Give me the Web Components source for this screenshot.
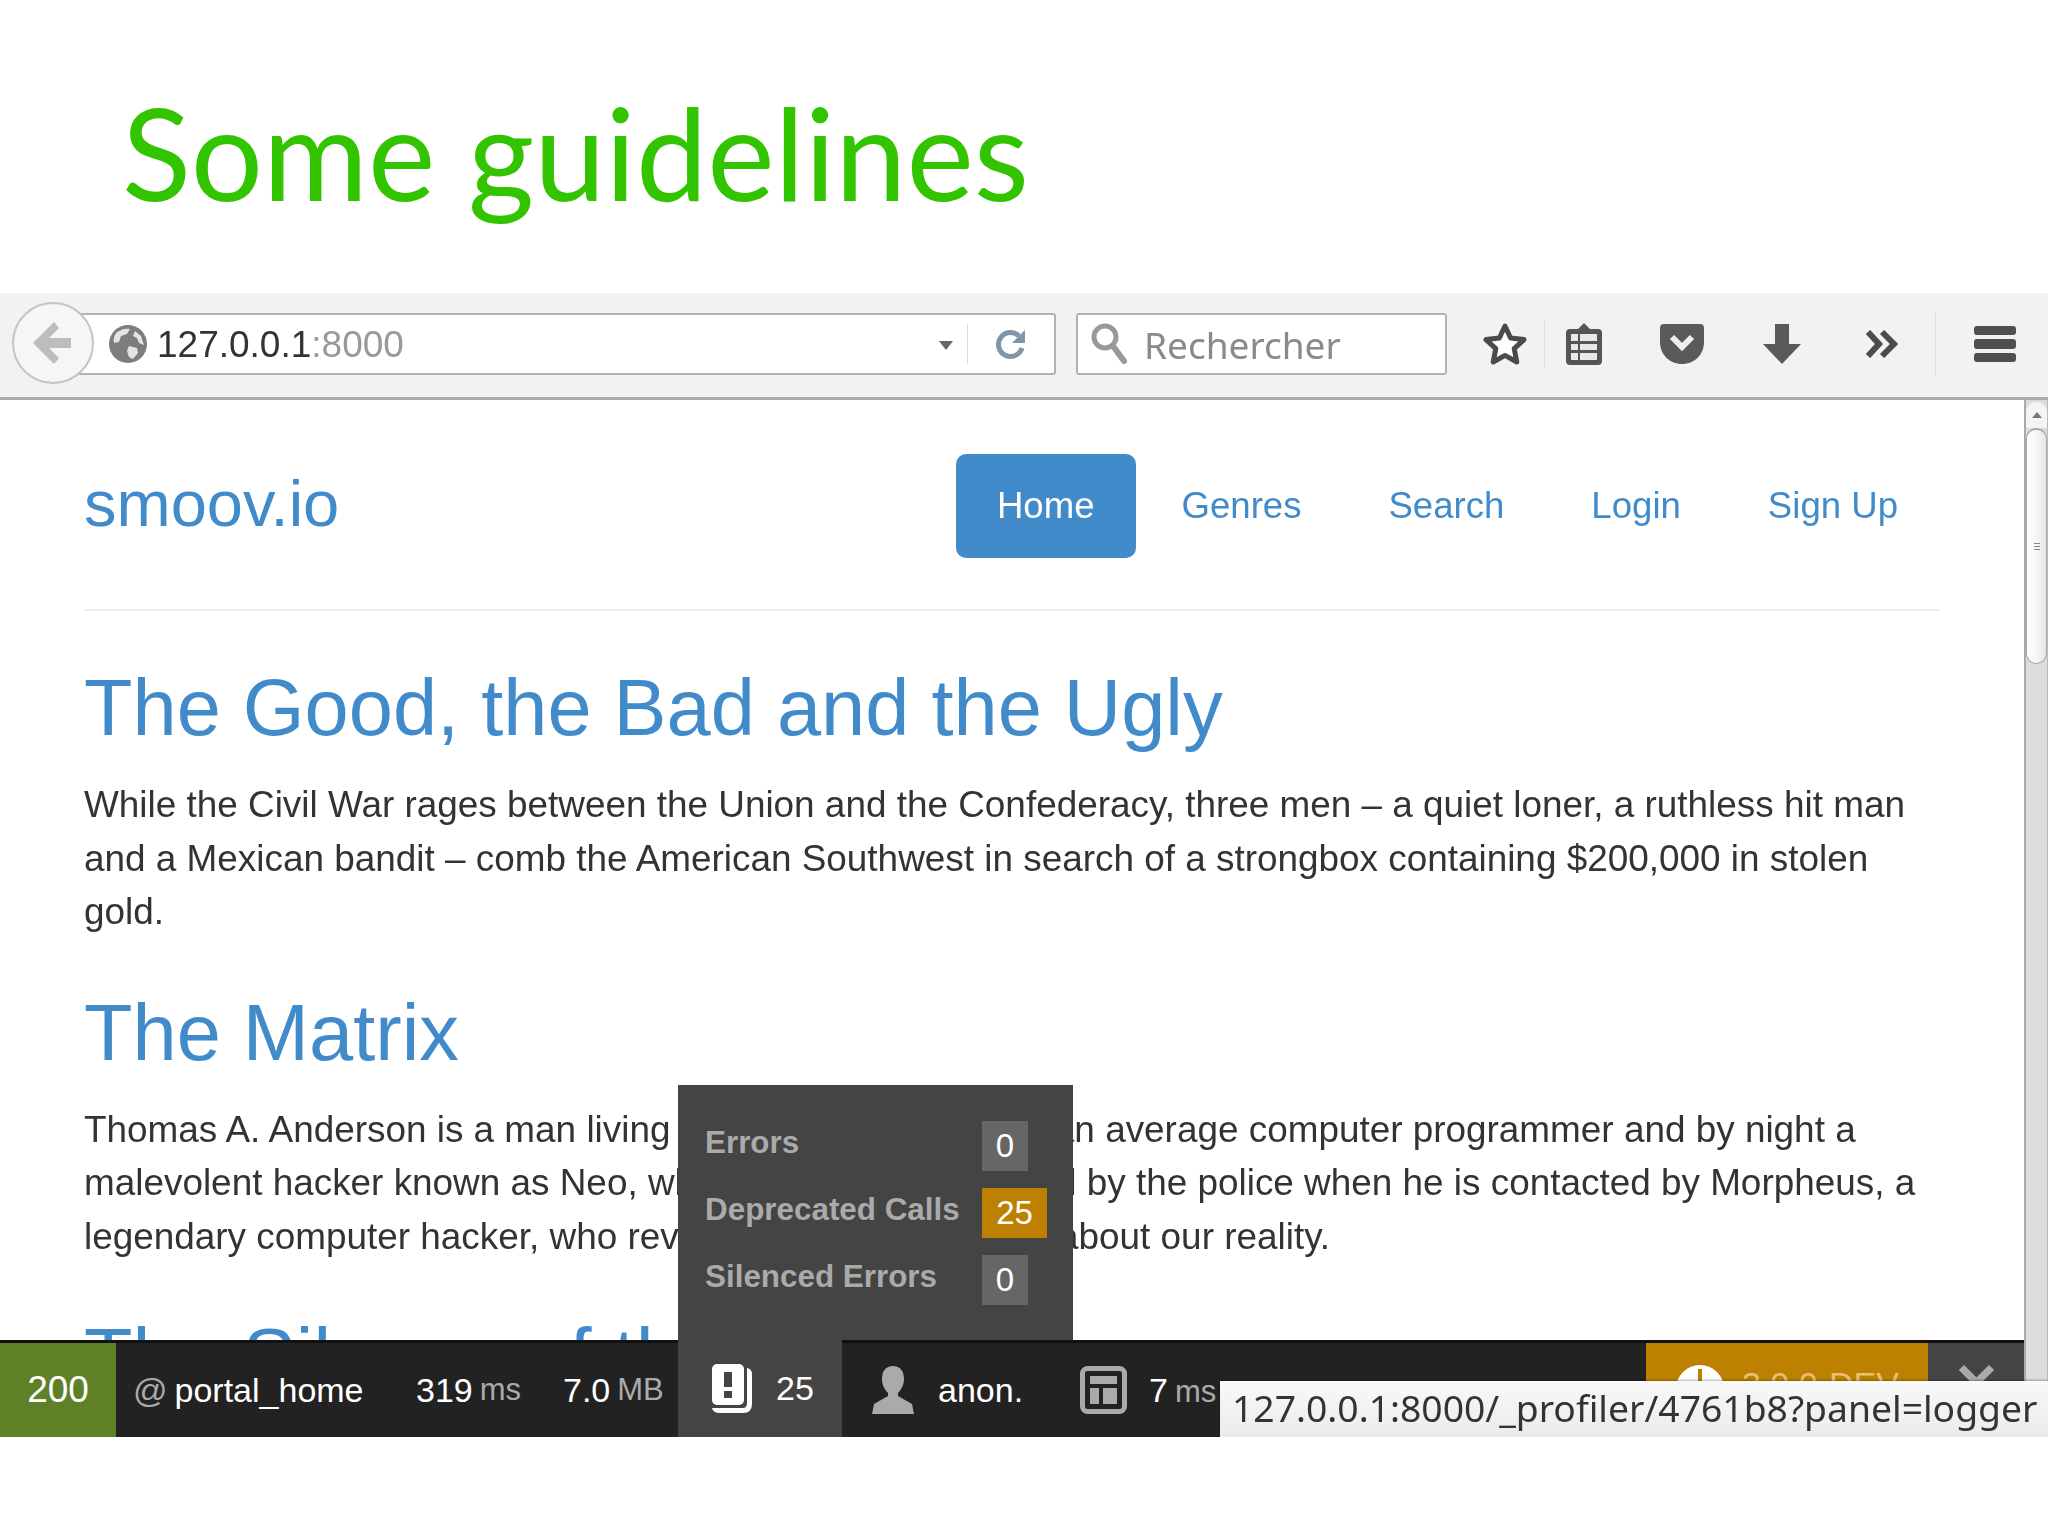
<!DOCTYPE html>
<html><head><meta charset="utf-8">
<style>
html,body{margin:0;padding:0;background:#fff}
body{width:2048px;height:1536px;overflow:hidden;font-family:"Liberation Sans",Arial,sans-serif}
</style></head><body>
<slide-deck>
  <slide-title>Some guidelines</slide-title>
  <browser-window>
    <browser-toolbar url-host="127.0.0.1" url-port=":8000" search="Rechercher"></browser-toolbar>
    <browser-viewport>
      <site-nav brand="smoov.io"></site-nav>
      <movie-item title-text="The Good, the Bad and the Ugly">While the Civil War rages between the Union and the Confederacy, three men – a quiet loner, a ruthless hit man and a Mexican bandit – comb the American Southwest in search of a strongbox containing $200,000 in stolen gold.</movie-item>
      <movie-item title-text="The Matrix">Thomas A. Anderson is a man living two lives. By day he is an average computer programmer and by night a malevolent hacker known as Neo, who finds himself targeted by the police when he is contacted by Morpheus, a legendary computer hacker, who reveals the shocking truth about our reality.</movie-item>
      <movie-item title-text="The Silence of the Lambs"></movie-item>
      <page-scrollbar></page-scrollbar>
      <debug-toolbar></debug-toolbar>
      <status-tip>127.0.0.1:8000/_profiler/4761b8?panel=logger</status-tip>
    </browser-viewport>
  </browser-window>
</slide-deck>
<template id="t-toolbar">
<style>
:host{display:flex;align-items:center;height:107px;box-sizing:border-box;background:#f2f2f2;border-bottom:3px solid #aaa;position:relative;padding:0 0 0 79px;font-family:"Liberation Sans",sans-serif}
.back{position:absolute;left:12px;top:9px;width:82px;height:82px;box-sizing:border-box;border-radius:50%;border:2px solid #c4c4c4;background:#f6f6f6;display:flex;align-items:center;justify-content:center;z-index:1}
.url{flex:none;width:977px;height:62px;box-sizing:border-box;background:#fff;border:2px solid #b3b3b3;border-radius:0 3px 3px 0;display:flex;align-items:center;padding-left:28px;margin-bottom:2px}
.url .host{color:#333;font-size:37px;margin-left:10px;position:relative;top:1px}
.url .port{color:#999;font-size:37px;position:relative;top:1px}
.url .sp{flex:1}
.drop{width:0;height:0;border-left:7px solid transparent;border-right:7px solid transparent;border-top:9px solid #666;margin:3px 14px 0 0}
.sep{width:1px;height:40px;background:#d8d8d8}
.reload{width:86px;display:flex;justify-content:center}
.search{flex:none;width:371px;height:62px;margin:0 0 2px 20px;box-sizing:border-box;background:#fff;border:2px solid #b3b3b3;border-radius:3px;display:flex;align-items:center;padding-left:12px;gap:16px;color:#8a8a8a;font:37px "Noto Sans",sans-serif}
.icons{flex:none;display:flex;align-items:center;height:100%;margin-bottom:2px}
.ic{flex:none;display:flex;align-items:center;justify-content:center}
.vsep{flex:none;width:1px;height:48px;background:#ddd}
</style>
<div class="back"><svg width="44" height="48" viewBox="0 0 44 48"><path d="M23 3 2 24l21 21 5-6-10-10h22V19H18L28 9z" fill="#bdbdbd"/></svg></div>
<div class="url">
  <svg width="38" height="38" viewBox="0 0 38 38"><circle cx="19" cy="19" r="19" fill="#7d7d7d"/><path d="M8 7c5-3 9-4 13-3l-3 5-6 2-2 6-5 1c-1-4 0-8 3-11zM20 21l8 2 1 5-5 6-4-2-2-6zM26 6l6 5 3 9-5-2-2-5-4-2z" fill="#e4e4e4"/></svg>
  <span class="host"><slot name="h"></slot></span><span class="port"><slot name="p"></slot></span>
  <span class="sp"></span><span class="drop"></span><span class="sep"></span>
  <span class="reload"><svg width="34" height="34" viewBox="0 0 34 34"><path d="M28 21a12 12 0 1 1-3-12" fill="none" stroke="#8195a8" stroke-width="5"/><path d="M31 3v13H18z" fill="#8195a8"/></svg></span>
</div>
<div class="search">
  <svg width="38" height="44" viewBox="0 0 38 44"><circle cx="15" cy="15" r="11" fill="none" stroke="#999" stroke-width="5"/><path d="m23 24 11 15" stroke="#999" stroke-width="6" stroke-linecap="round"/></svg>
  <slot name="s"></slot>
</div>
<div class="icons">
  <span class="ic" style="width:79px;padding-left:18px"><svg width="44" height="44" viewBox="0 0 44 44"><path d="M22 4l5.6 12 13.4 1.6-9.8 9 2.6 13.4L22 33.400 10.200 40l2.600-13.400-9.800-9L16.400 16z" fill="#fff" stroke="#4a4a4a" stroke-width="5" stroke-linejoin="round"/></svg></span>
  <span class="vsep"></span>
  <span class="ic" style="width:78px"><svg width="38" height="44" viewBox="0 0 38 44"><path d="M19 1l6 6h8a4 4 0 0 1 4 4v28a4 4 0 0 1-4 4H5a4 4 0 0 1-4-4V11a4 4 0 0 1 4-4h8z" fill="#555"/><path d="M6 12h26v7H6zM6 22h26v6H6zM6 31h26v7H6z" fill="#e8e8e8"/><path d="M13 11h2v28h-2z" fill="#555"/></svg></span>
  <span class="ic" style="width:118px"><svg width="44" height="40" viewBox="0 0 44 40"><path d="M0 4a4 4 0 0 1 4-4h36a4 4 0 0 1 4 4v14c0 13-10 22-22 22S0 31 0 18z" fill="#5a5a5a"/><path d="M12 13l10 10 10-10" fill="none" stroke="#eee" stroke-width="6"/></svg></span>
  <span class="ic" style="width:82px"><svg width="40" height="40" viewBox="0 0 40 40"><path d="M13 0h14v20h12L20 40 1 20h12z" fill="#5a5a5a"/></svg></span>
  <span class="ic" style="width:107px;padding-left:5px"><svg width="32" height="28" viewBox="0 0 32 28"><path d="M2 2l11 12L2 26M16 2l12 12-12 12" fill="none" stroke="#4c4c4c" stroke-width="6"/></svg></span>
  <span class="vsep" style="height:62px"></span>
  <span class="ic" style="width:75px;padding-left:38px;justify-content:flex-start"><svg width="42" height="36" viewBox="0 0 42 36"><rect width="42" height="9" rx="3" fill="#4f4f4f"/><rect y="13" width="42" height="10" rx="3" fill="#4f4f4f"/><rect y="27" width="42" height="9" rx="3" fill="#4f4f4f"/></svg></span>
</div>
</template>
<template id="t-nav">
<style>
:host{display:flex;align-items:center;justify-content:space-between;height:211px;box-sizing:border-box;padding:55px 0 52px;border-bottom:2px solid #eee;margin-bottom:53px;font-family:"Liberation Sans",sans-serif}
.brand{font-size:65px;color:#428bca;line-height:100px;margin-bottom:4px}
nav{display:flex;gap:5px}
a{display:block;padding:0 41px;height:104px;line-height:103px;font-size:36.6px;color:#428bca;border-radius:10px;text-decoration:none}
a.on{background:#428bca;color:#fff}
</style>
<span class="brand"><slot name="b"></slot></span>
<nav><a class="on" href="#">Home</a><a href="#">Genres</a><a href="#">Search</a><a href="#">Login</a><a href="#">Sign Up</a></nav>
</template>
<template id="t-movie">
<style>
:host{display:block;font-family:"Liberation Sans",sans-serif}
h2{margin:0;font-weight:400;font-size:79.4px;line-height:88px;color:#428bca}
p{margin:26px 0 50px;font-size:36.9px;line-height:53.5px;color:#333}
</style>
<h2></h2><p><slot></slot></p>
</template>
<template id="t-dbg">
<style>
:host{display:flex;position:absolute;left:0;right:24px;bottom:0;height:97px;background:#222;border-top:3px solid #111;box-sizing:border-box;color:#fff;font:34px "Liberation Sans",sans-serif;align-items:stretch}
.it{display:flex;align-items:center;white-space:nowrap}
.st{background:#5e8128;width:116px;justify-content:center;font-size:37px}
small{font-size:31px;color:#aaa;margin-left:7px}
.at{color:#aaa;margin-right:7px;font-size:34px}
.tab{background:#444;width:164px;position:relative;gap:22px;padding-left:32px;box-sizing:border-box;margin-top:-3px}
.pop{position:absolute;left:0;bottom:100%;width:395px;height:255px;background:#444;box-sizing:border-box;padding:36px 0 0 27px;display:flex;flex-direction:column}
.row{display:flex;align-items:center;height:50px;margin-bottom:17px;color:#aaa;font-weight:700;font-size:31.4px}
.lab{width:277px;margin-top:-6px}
.v{background:#666;color:#fff;font-weight:400;font-size:33px;height:100%;min-width:46px;display:flex;align-items:center;justify-content:center}
.v.w{background:#bd8000;width:65px}
.sp{flex:1}
.gold{background:#bd8000;width:282px;gap:18px;padding:0 0 0 30px;box-sizing:border-box;color:#e8c070;align-items:flex-start;padding-top:22px}
.x{background:#444;width:96px;justify-content:center;color:#aaa;font-size:56px;font-weight:700;align-items:flex-start;padding-top:8px;box-sizing:border-box}
</style>
<div class="it st">200</div>
<div class="it" style="padding-left:17px;width:300px;box-sizing:border-box"><span class="at">@</span>portal_home</div>
<div class="it" style="width:147px"><span>319</span><small>ms</small></div>
<div class="it" style="width:115px"><span>7.0</span><small>MB</small></div>
<div class="it tab">
  <div class="pop">
    <div class="row"><span class="lab">Errors</span><span class="v">0</span></div>
    <div class="row"><span class="lab">Deprecated Calls</span><span class="v w">25</span></div>
    <div class="row"><span class="lab">Silenced Errors</span><span class="v">0</span></div>
  </div>
  <svg width="44" height="50" viewBox="0 0 44 50"><path d="M37 4q5 1 5 6v30q0 9-9 9H10q-7 0-8-5h31q4 0 4-5z" fill="#fff"/><rect x="2" y="0" width="32" height="41" rx="5" fill="#fff"/><path d="M14 8h8v15h-8zM14 27h8v7h-8z" fill="#444"/></svg>
  <span>25</span>
</div>
<div class="it" style="padding-left:30px;gap:24px;width:238px;box-sizing:border-box">
  <svg width="42" height="48" viewBox="0 0 42 48"><path d="M21 0c7 0 11 5 11 13 0 6-3 11-6 14v3l14 8 2 10H0l2-10 14-8v-3c-3-3-6-8-6-14C10 5 14 0 21 0z" fill="#aaa"/></svg>
  <span>anon.</span>
</div>
<div class="it" style="gap:22px;width:140px">
  <svg width="47" height="48" viewBox="0 0 47 48"><rect x="2.500" y="2.500" width="42" height="43" rx="5" fill="none" stroke="#aaa" stroke-width="5"/><path d="M10 10h27v8H10zM10 22h9v16h-9zM23 22h14v16H23z" fill="#aaa"/></svg>
  <span style="white-space:nowrap">7<small>ms</small></span>
</div>
<div class="sp"></div>
<div class="it gold">
  <svg width="48" height="48" viewBox="0 0 48 48"><circle cx="24" cy="24" r="24" fill="#fff"/><path d="M26 4v14h-4V4z" fill="#bd8000"/></svg>
  <span>3.0.0-DEV</span>
</div>
<div class="it x">✕</div>
</template>
<template id="t-scroll">
<style>
:host{display:block;position:absolute;right:0;top:0;bottom:0;width:24px;box-sizing:border-box;background:#dcdcdc;border-left:2px solid #aaa;border-right:1px solid #bbb}
.b{height:26px;background:#f4f4f4;border-radius:10px 10px 0 0;display:flex;align-items:center;justify-content:center;margin-top:2px}
.b i{width:0;height:0;border:5px solid transparent;border-top:0;border-bottom:6px solid #777}
.t{height:236px;background:linear-gradient(90deg,#fff,#f3f3f3 60%,#e4e4e4);border-radius:11px;border:1px solid #aaa;border-top-width:2px;box-sizing:border-box;display:flex;flex-direction:column;align-items:center;justify-content:center;gap:2px}
.t u{display:block;width:6px;height:1px;background:#888}
</style>
<div class="b"><i></i></div><div class="t"><u></u><u></u><u></u></div>
</template>
<template id="t-tip">
<style>
:host{display:block;position:absolute;left:1220px;right:0;bottom:0;height:56px;box-sizing:border-box;background:linear-gradient(#f9f9f9,#ebebeb);color:#333;font:37.3px/54px "Noto Sans",sans-serif;padding-left:12px;white-space:nowrap;box-shadow:0 -1px 2px rgba(0,0,0,.3);overflow:hidden}
</style>
<slot></slot>
</template>
<script>
function shadow(host,id){const r=host.attachShadow({mode:'open'});r.appendChild(document.getElementById(id).content.cloneNode(true));return r}
function plainEl(name,css){customElements.define(name,class extends HTMLElement{constructor(){super();this.attachShadow({mode:'open'}).innerHTML='<style>'+css+'</style><slot></slot>'}})}
plainEl('slide-deck',':host{display:block;width:2048px;height:1536px;filter:blur(.5px)}');
plainEl('slide-title',':host{display:block;height:293px;box-sizing:border-box;padding:67px 0 0 122px;font:127.500px/170px Lato,sans-serif;color:#33c400;white-space:nowrap}');
plainEl('browser-window',':host{display:block}');
plainEl('browser-viewport',':host{display:block;position:relative;height:1037px;overflow:hidden;padding:0 109px 0 84px;box-sizing:border-box;background:#fff}');
customElements.define('browser-toolbar',class extends HTMLElement{connectedCallback(){if(this.shadowRoot)return;shadow(this,'t-toolbar');
 [['h','url-host'],['p','url-port'],['s','search']].forEach(([n,a])=>{const s=document.createElement('span');s.slot=n;s.textContent=this.getAttribute(a);this.appendChild(s)})}});
customElements.define('site-nav',class extends HTMLElement{connectedCallback(){if(this.shadowRoot)return;shadow(this,'t-nav');const s=document.createElement('span');s.slot='b';s.textContent=this.getAttribute('brand');this.appendChild(s)}});
customElements.define('movie-item',class extends HTMLElement{connectedCallback(){if(this.shadowRoot)return;const r=shadow(this,'t-movie');r.querySelector('h2').textContent=this.getAttribute('title-text');if(!this.textContent.trim())r.querySelector('p').remove()}});
customElements.define('debug-toolbar',class extends HTMLElement{connectedCallback(){if(!this.shadowRoot)shadow(this,'t-dbg')}});
customElements.define('page-scrollbar',class extends HTMLElement{connectedCallback(){if(!this.shadowRoot)shadow(this,'t-scroll')}});
customElements.define('status-tip',class extends HTMLElement{connectedCallback(){if(!this.shadowRoot)shadow(this,'t-tip')}});
</script>
</body></html>
